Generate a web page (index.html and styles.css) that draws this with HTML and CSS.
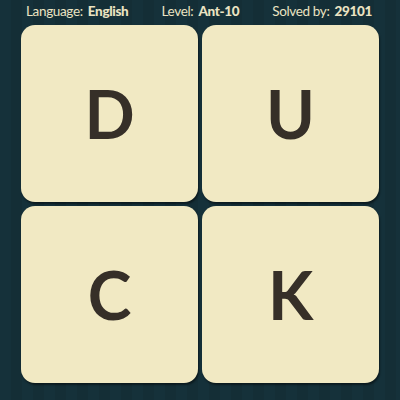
FILE: index.html
```html
<!DOCTYPE html>
<html>
<head>
<meta charset="utf-8">
<link rel="stylesheet" href="styles.css">
</head>
<body>
<div class="page">
  <header class="info">
    <span class="item">Language: <b>English</b></span>
    <span class="item">Level: <b>Ant-10</b></span>
    <span class="item">Solved by: <b>29101</b></span>
  </header>
  <main class="board">
    <div class="tile">D</div>
    <div class="tile">U</div>
    <div class="tile">C</div>
    <div class="tile">K</div>
  </main>
</div>
</body>
</html>
```
FILE: styles.css
```css
html, body {
  margin: 0;
  padding: 0;
}
body {
  width: 400px;
  height: 400px;
  overflow: hidden;
  background-color: #15313a;
  background-image: repeating-linear-gradient(90deg,
    rgba(255,255,255,0.0) 0px,
    rgba(255,255,255,0.0) 11px,
    rgba(0,0,0,0.07) 11px,
    rgba(0,0,0,0.07) 22px);
  font-family: Lato, "Noto Sans", sans-serif;
}
.page {
  display: flex;
  flex-direction: column;
}
.info {
  height: 25px;
  display: flex;
  justify-content: space-between;
  align-items: center;
  padding: 0 28px 3px 26px;
  box-sizing: border-box;
  color: #ebe3c2;
  font-size: 13.5px;
  line-height: 14px;
  letter-spacing: -0.35px;
}
.info b {
  font-weight: 900;
  margin-left: 2px;
}
.board {
  display: grid;
  grid-template-columns: 177px 177px;
  grid-auto-rows: 177px;
  gap: 4px;
  padding-left: 21px;
}
.tile {
  background: #f1e9c3;
  border-radius: 14px;
  box-shadow: 1px 2px 2px rgba(0,0,0,0.45);
  display: flex;
  align-items: center;
  justify-content: center;
  color: #362f28;
  font-size: 66px;
  font-weight: 700;
  line-height: 1;
}
```
